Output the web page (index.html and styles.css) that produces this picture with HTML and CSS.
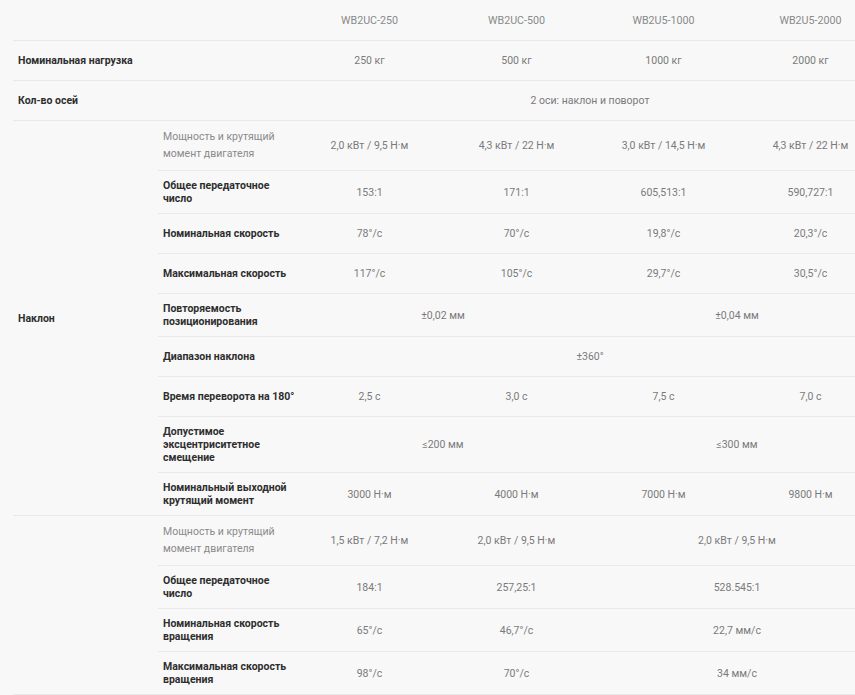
FILE: index.html
```html
<!DOCTYPE html>
<html lang="ru">
<head>
<meta charset="utf-8">
<link rel="stylesheet" href="styles.css">
</head>
<body>
<div class="wrap">
<table class="spec">
  <colgroup>
    <col class="c-label"><col class="c-sub"><col class="c-val"><col class="c-val"><col class="c-val"><col class="c-val">
  </colgroup>
  <thead>
    <tr>
      <th colspan="2"></th>
      <th>WB2UC-250</th><th>WB2UC-500</th><th>WB2U5-1000</th><th>WB2U5-2000</th>
    </tr>
  </thead>
  <tbody>
    <tr>
      <td class="label" colspan="2">Номинальная нагрузка</td>
      <td>250 кг</td><td>500 кг</td><td>1000 кг</td><td>2000 кг</td>
    </tr>
    <tr>
      <td class="label" colspan="2">Кол-во осей</td>
      <td colspan="4">2 оси: наклон и поворот</td>
    </tr>
  </tbody>
  <tbody>
    <tr>
      <td class="label group" rowspan="10">Наклон</td>
      <td class="sub muted">Мощность и крутящий момент двигателя</td>
      <td>2,0 кВт / 9,5 Н·м</td><td>4,3 кВт / 22 Н·м</td><td>3,0 кВт / 14,5 Н·м</td><td>4,3 кВт / 22 Н·м</td>
    </tr>
    <tr>
      <td class="sub">Общее передаточное число</td>
      <td>153:1</td><td>171:1</td><td>605,513:1</td><td>590,727:1</td>
    </tr>
    <tr>
      <td class="sub">Номинальная скорость</td>
      <td>78°/с</td><td>70°/с</td><td>19,8°/с</td><td>20,3°/с</td>
    </tr>
    <tr>
      <td class="sub">Максимальная скорость</td>
      <td>117°/с</td><td>105°/с</td><td>29,7°/с</td><td>30,5°/с</td>
    </tr>
    <tr>
      <td class="sub">Повторяемость позиционирования</td>
      <td colspan="2">±0,02 мм</td><td colspan="2">±0,04 мм</td>
    </tr>
    <tr>
      <td class="sub">Диапазон наклона</td>
      <td colspan="4">±360°</td>
    </tr>
    <tr>
      <td class="sub">Время переворота на 180°</td>
      <td>2,5 с</td><td>3,0 с</td><td>7,5 с</td><td>7,0 с</td>
    </tr>
    <tr>
      <td class="sub">Допустимое эксцентриситетное смещение</td>
      <td colspan="2">≤200 мм</td><td colspan="2">≤300 мм</td>
    </tr>
    <tr>
      <td class="sub">Номинальный выходной крутящий момент</td>
      <td>3000 Н·м</td><td>4000 Н·м</td><td>7000 Н·м</td><td>9800 Н·м</td>
    </tr>
  </tbody>
  <tbody>
    <tr>
      <td class="label group" rowspan="4"></td>
      <td class="sub muted">Мощность и крутящий момент двигателя</td>
      <td>1,5 кВт / 7,2 Н·м</td><td>2,0 кВт / 9,5 Н·м</td><td colspan="2">2,0 кВт / 9,5 Н·м</td>
    </tr>
    <tr>
      <td class="sub">Общее передаточное число</td>
      <td>184:1</td><td>257,25:1</td><td colspan="2">528.545:1</td>
    </tr>
    <tr>
      <td class="sub">Номинальная скорость вращения</td>
      <td>65°/с</td><td>46,7°/с</td><td colspan="2">22,7 мм/с</td>
    </tr>
    <tr>
      <td class="sub">Максимальная скорость вращения</td>
      <td>98°/с</td><td>70°/с</td><td colspan="2">34 мм/с</td>
    </tr>
  </tbody>
</table>
</div>
</body>
</html>
```

FILE: styles.css
```css
html, body {
  margin: 0;
  padding: 0;
  background: #f8f8f8;
  overflow: hidden;
}
body {
  font-family: Roboto, "Liberation Sans", sans-serif;
  font-size: 10.5px;
  color: #777;
}
.wrap {
  padding-left: 13px;
  width: 900px;
}
.spec {
  border-collapse: collapse;
  table-layout: fixed;
  width: 871px;
}
.c-label { width: 145px; }
.c-sub { width: 138px; }
.c-val { width: 147px; }

.spec th {
  height: 40px;
  font-weight: normal;
  color: #8a8a8a;
  font-size: 10.7px;
  text-align: center;
  vertical-align: middle;
  border-bottom: 1px solid #e9e9e9;
  padding: 0;
}
.spec td {
  height: 23px;
  padding: 8px 0;
  line-height: 13px;
  text-align: center;
  vertical-align: middle;
  border-bottom: 1px solid #e9e9e9;
  color: #7a7a7a;
}
.spec td.label,
.spec td.sub {
  text-align: left;
  padding-left: 5px;
  padding-right: 0;
  color: #2e2e2e;
  font-weight: 700;
}
.spec td.sub.muted {
  font-weight: normal;
  color: #8a8a8a;
  line-height: 16.5px;
  padding-right: 20px;
}
```
